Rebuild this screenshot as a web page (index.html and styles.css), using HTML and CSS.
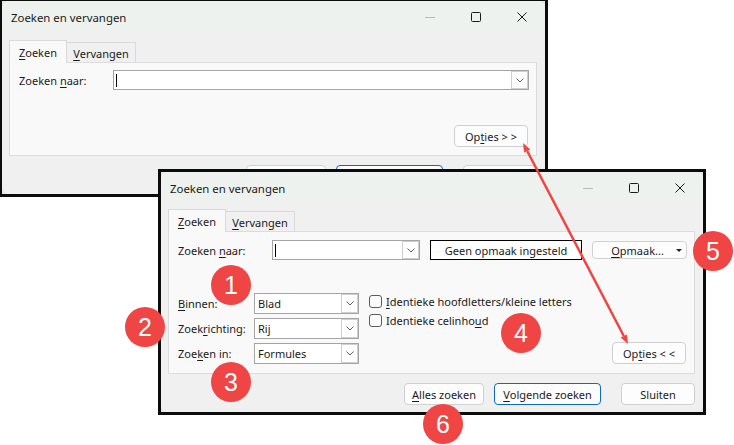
FILE: index.html
```html
<!DOCTYPE html>
<html lang="nl">
<head>
<meta charset="utf-8">
<title>Zoeken en vervangen</title>
<link rel="stylesheet" href="styles.css">
</head>
<body>
<div class="desk">

  <div class="frame frame-small">
    <div class="window">
      <div class="titlebar">
        <span class="title">Zoeken en vervangen</span>
        <div class="controls">
          <span class="ctl"><svg width="10" height="10" viewBox="0 0 10 10"><line x1="0" y1="5.5" x2="10" y2="5.5" stroke="#b9b9b9" stroke-width="1"/></svg></span>
          <span class="ctl"><svg width="10" height="10" viewBox="0 0 10 10"><rect x="0.5" y="0.5" width="9" height="9" rx="1" fill="none" stroke="#1a1a1a" stroke-width="1"/></svg></span>
          <span class="ctl"><svg width="10" height="10" viewBox="0 0 10 10"><path d="M0.5 0.5 L9.5 9.5 M9.5 0.5 L0.5 9.5" stroke="#1a1a1a" stroke-width="1" fill="none"/></svg></span>
        </div>
      </div>
      <div class="body">
        <div class="tabs">
          <div class="tab tab-active"><u>Z</u>oeken</div>
          <div class="tab tab-other"><u>V</u>ervangen</div>
        </div>
        <div class="panel panel-small">
          <div class="row">
            <span class="lbl"><span>Zoeken <u>n</u>aar:</span></span>
            <div class="combo combo-long">
              <span class="caret"></span>
              <span class="arrowbox"><svg width="8" height="5" viewBox="0 0 8 5"><polyline points="0.5,0.5 4,4 7.5,0.5" fill="none" stroke="#5e5e5e" stroke-width="1"/></svg></span>
            </div>
          </div>
          <div class="foot">
            <div class="btn btn-opties">Op<u>t</u>ies &gt; &gt;</div>
          </div>
        </div>
        <div class="actions">
          <div class="btn btn-all"><u>A</u>lles zoeken</div>
          <div class="btn btn-next btn-primary"><u>V</u>olgende zoeken</div>
          <div class="btn btn-close">Sluiten</div>
        </div>
      </div>
    </div>
  </div>

  <div class="frame frame-big">
    <div class="window">
      <div class="titlebar">
        <span class="title">Zoeken en vervangen</span>
        <div class="controls">
          <span class="ctl"><svg width="10" height="10" viewBox="0 0 10 10"><line x1="0" y1="5.5" x2="10" y2="5.5" stroke="#b9b9b9" stroke-width="1"/></svg></span>
          <span class="ctl"><svg width="10" height="10" viewBox="0 0 10 10"><rect x="0.5" y="0.5" width="9" height="9" rx="1" fill="none" stroke="#1a1a1a" stroke-width="1"/></svg></span>
          <span class="ctl"><svg width="10" height="10" viewBox="0 0 10 10"><path d="M0.5 0.5 L9.5 9.5 M9.5 0.5 L0.5 9.5" stroke="#1a1a1a" stroke-width="1" fill="none"/></svg></span>
        </div>
      </div>
      <div class="body">
        <div class="tabs">
          <div class="tab tab-active"><u>Z</u>oeken</div>
          <div class="tab tab-other"><u>V</u>ervangen</div>
        </div>
        <div class="panel panel-big">
          <div class="row">
            <span class="lbl"><span>Zoeken <u>n</u>aar:</span></span>
            <div class="combo combo-short">
              <span class="caret"></span>
              <span class="arrowbox"><svg width="8" height="5" viewBox="0 0 8 5"><polyline points="0.5,0.5 4,4 7.5,0.5" fill="none" stroke="#5e5e5e" stroke-width="1"/></svg></span>
            </div>
            <div class="preview">Geen opmaak ingesteld</div>
            <div class="btn btn-format"><span class="btn-text"><u>O</u>pmaak...</span><span class="tri"></span></div>
          </div>
          <div class="lower">
            <span class="lbl2 r1"><span><u>B</u>innen:</span></span>
            <div class="combo select r1"><span class="val">Blad</span><span class="arrowbox"><svg width="8" height="5" viewBox="0 0 8 5"><polyline points="0.5,0.5 4,4 7.5,0.5" fill="none" stroke="#5e5e5e" stroke-width="1"/></svg></span></div>
            <span class="lbl2 r2"><span>Zoek<u>r</u>ichting:</span></span>
            <div class="combo select r2"><span class="val">Rij</span><span class="arrowbox"><svg width="8" height="5" viewBox="0 0 8 5"><polyline points="0.5,0.5 4,4 7.5,0.5" fill="none" stroke="#5e5e5e" stroke-width="1"/></svg></span></div>
            <span class="lbl2 r3"><span>Zoe<u>k</u>en in:</span></span>
            <div class="combo select r3"><span class="val">Formules</span><span class="arrowbox"><svg width="8" height="5" viewBox="0 0 8 5"><polyline points="0.5,0.5 4,4 7.5,0.5" fill="none" stroke="#5e5e5e" stroke-width="1"/></svg></span></div>
            <div class="checks">
              <div class="check"><span class="box"></span><span><u>I</u>dentieke hoofdletters/kleine letters</span></div>
              <div class="check"><span class="box"></span><span>Identieke celinho<u>u</u>d</span></div>
            </div>
            <div class="btn btn-opties btn-less">Op<u>t</u>ies &lt; &lt;</div>
          </div>
        </div>
        <div class="actions">
          <div class="btn btn-all"><u>A</u>lles zoeken</div>
          <div class="btn btn-next btn-primary"><u>V</u>olgende zoeken</div>
          <div class="btn btn-close">Sluiten</div>
        </div>
      </div>
    </div>
  </div>

  <svg class="arrow" width="734" height="445" viewBox="0 0 734 445">
    <line x1="527.2" y1="151" x2="623.8" y2="336" stroke="#f04545" stroke-width="2.5"/>
    <polygon points="523,143 530.3,149.4 524.1,152.6" fill="#f04545"/>
    <polygon points="628,344 626.9,334.4 620.7,337.6" fill="#f04545"/>
  </svg>

  <div class="badge b1">1</div>
  <div class="badge b2">2</div>
  <div class="badge b3">3</div>
  <div class="badge b4">4</div>
  <div class="badge b5">5</div>
  <div class="badge b6">6</div>
</div>
</body>
</html>
```

FILE: styles.css
```css
* { box-sizing: border-box; margin: 0; padding: 0; }
html, body { width: 734px; height: 445px; overflow: hidden; background: #ffffff; }
body {
  font-family: "Noto Sans", "Liberation Sans", sans-serif;
  font-size: 11px;
  color: #1a1a1a;
}
u { text-decoration-thickness: 1px; text-underline-offset: 2px; }

.desk { position: relative; width: 734px; height: 445px; }

.frame {
  position: absolute;
  border: 3px solid #0c0c0c;
  background: #e4e7ea;
}
.frame-small { left: -1px; top: -2px; width: 549px; height: 199px; }
.frame-big { left: 158px; top: 169px; width: 548px; height: 246px; }

.window {
  height: 100%;
  background: #f0f0f0;
  border-radius: 7px;
  overflow: hidden;
  display: flex;
  flex-direction: column;
}

.titlebar {
  height: 32px;
  flex: none;
  display: flex;
  align-items: center;
  background: #eef2ee;
  padding-left: 9px;
}
.title { flex: 1; font-size: 11.4px; }
.controls { display: flex; height: 100%; }
.ctl { width: 46px; display: flex; align-items: center; justify-content: center; }

.body {
  flex: 1;
  display: flex;
  flex-direction: column;
  padding: 7px 8px 0 7px;
}
.frame-big .body { padding-top: 5px; }

.tabs { display: flex; align-items: flex-end; height: 22px; flex: none; }
.tab {
  height: 20px;
  border: 1px solid #d9d9d9;
  border-bottom: none;
  background: #f0f0f0;
  display: flex;
  align-items: center;
  justify-content: center;
  padding-top: 1px;
}
.tab-active {
  width: 58px;
  height: 23px;
  margin-bottom: -1px;
  position: relative;
  z-index: 1;
  background: #f9f9f9;
  padding-top: 1px;
}
.tab-other { width: 69px; border-left: none; }

.panel {
  flex: none;
  border: 1px solid #dcdcdc;
  background: #f9f9f9;
  display: flex;
  flex-direction: column;
}
.panel-small { height: 94px; padding: 7px 7px 8px 9px; }
.panel-big { height: 143px; padding: 8px 7px 8px 9px; }

.row { display: flex; align-items: center; height: 20px; }
.lbl { width: 94px; flex: none; }

.combo {
  height: 20px;
  border: 1px solid #a4a4a4;
  background: #ffffff;
  display: flex;
  align-items: center;
}
.combo-long { flex: 1; }
.combo-short { width: 148px; }
.caret { width: 1px; height: 13px; background: #000; margin-left: 2px; }
.arrowbox {
  margin-left: auto;
  width: 17px;
  height: 18px;
  border: 1px solid #cfcfcf;
  display: flex;
  align-items: center;
  justify-content: center;
  background: #fff;
}
.val { padding-left: 3px; }

.preview {
  width: 152px;
  height: 20px;
  margin-left: 10px;
  border: 1px solid #000;
  background: #fff;
  display: flex;
  align-items: center;
  justify-content: center;
}

.btn {
  height: 22px;
  border: 1px solid #d0d0d0;
  border-radius: 4px;
  background: #fdfdfd;
  display: flex;
  align-items: center;
  justify-content: center;
  flex: none;
}
.btn-primary { border-color: #0f67c6; }
.btn-format { width: 95px; height: 18px; margin-left: 10px; padding-right: 4px; }
.btn-text { flex: 1; text-align: center; padding-left: 6px; }
.tri {
  width: 0; height: 0;
  border-left: 3px solid transparent;
  border-right: 3px solid transparent;
  border-top: 3px solid #222;
}

.foot { margin-top: auto; display: flex; justify-content: flex-end; padding-right: 1px; }
.btn-opties { width: 74px; }

.lower {
  margin-top: 33px;
  display: grid;
  grid-template-columns: 76px 105px 1fr auto;
  grid-template-rows: repeat(3, 21px);
  row-gap: 4px;
}
.lbl2 { grid-column: 1; display: flex; align-items: center; }
.select { grid-column: 2; height: 21px; }
.select .arrowbox { height: 19px; }
.r1 { grid-row: 1; }
.r2 { grid-row: 2; }
.r3 { grid-row: 3; }
.checks {
  grid-column: 3;
  grid-row: 1 / 4;
  margin-left: 10px;
  padding-top: 2px;
  display: flex;
  flex-direction: column;
  gap: 6px;
}
.check { display: flex; align-items: center; height: 13px; }
.box {
  width: 13px; height: 13px;
  border: 1px solid #5c5c5c;
  border-radius: 3px;
  background: #fbfbfb;
  margin-right: 4px;
  flex: none;
}
.btn-less { grid-column: 4; grid-row: 3; align-self: end; margin-right: 1px; }

.actions {
  flex: none;
  margin-top: 9px;
  display: flex;
  justify-content: flex-end;
  gap: 10px;
}
.btn-all { width: 80px; }
.btn-next { width: 107px; }
.btn-close { width: 74px; margin-left: 10px; }

.arrow { position: absolute; left: 0; top: 0; z-index: 5; pointer-events: none; }

.badge {
  position: absolute;
  z-index: 6;
  width: 40px;
  height: 40px;
  border-radius: 50%;
  background: #f04545;
  color: #fff;
  font-family: "Liberation Sans", Arial, sans-serif;
  font-size: 25px;
  display: flex;
  align-items: center;
  justify-content: center;
}
.b1 { left: 211px; top: 265px; }
.b2 { left: 125px; top: 307px; }
.b3 { left: 211px; top: 362px; }
.b4 { left: 501px; top: 313px; }
.b5 { left: 693px; top: 231px; }
.b6 { left: 423px; top: 404px; }
```
